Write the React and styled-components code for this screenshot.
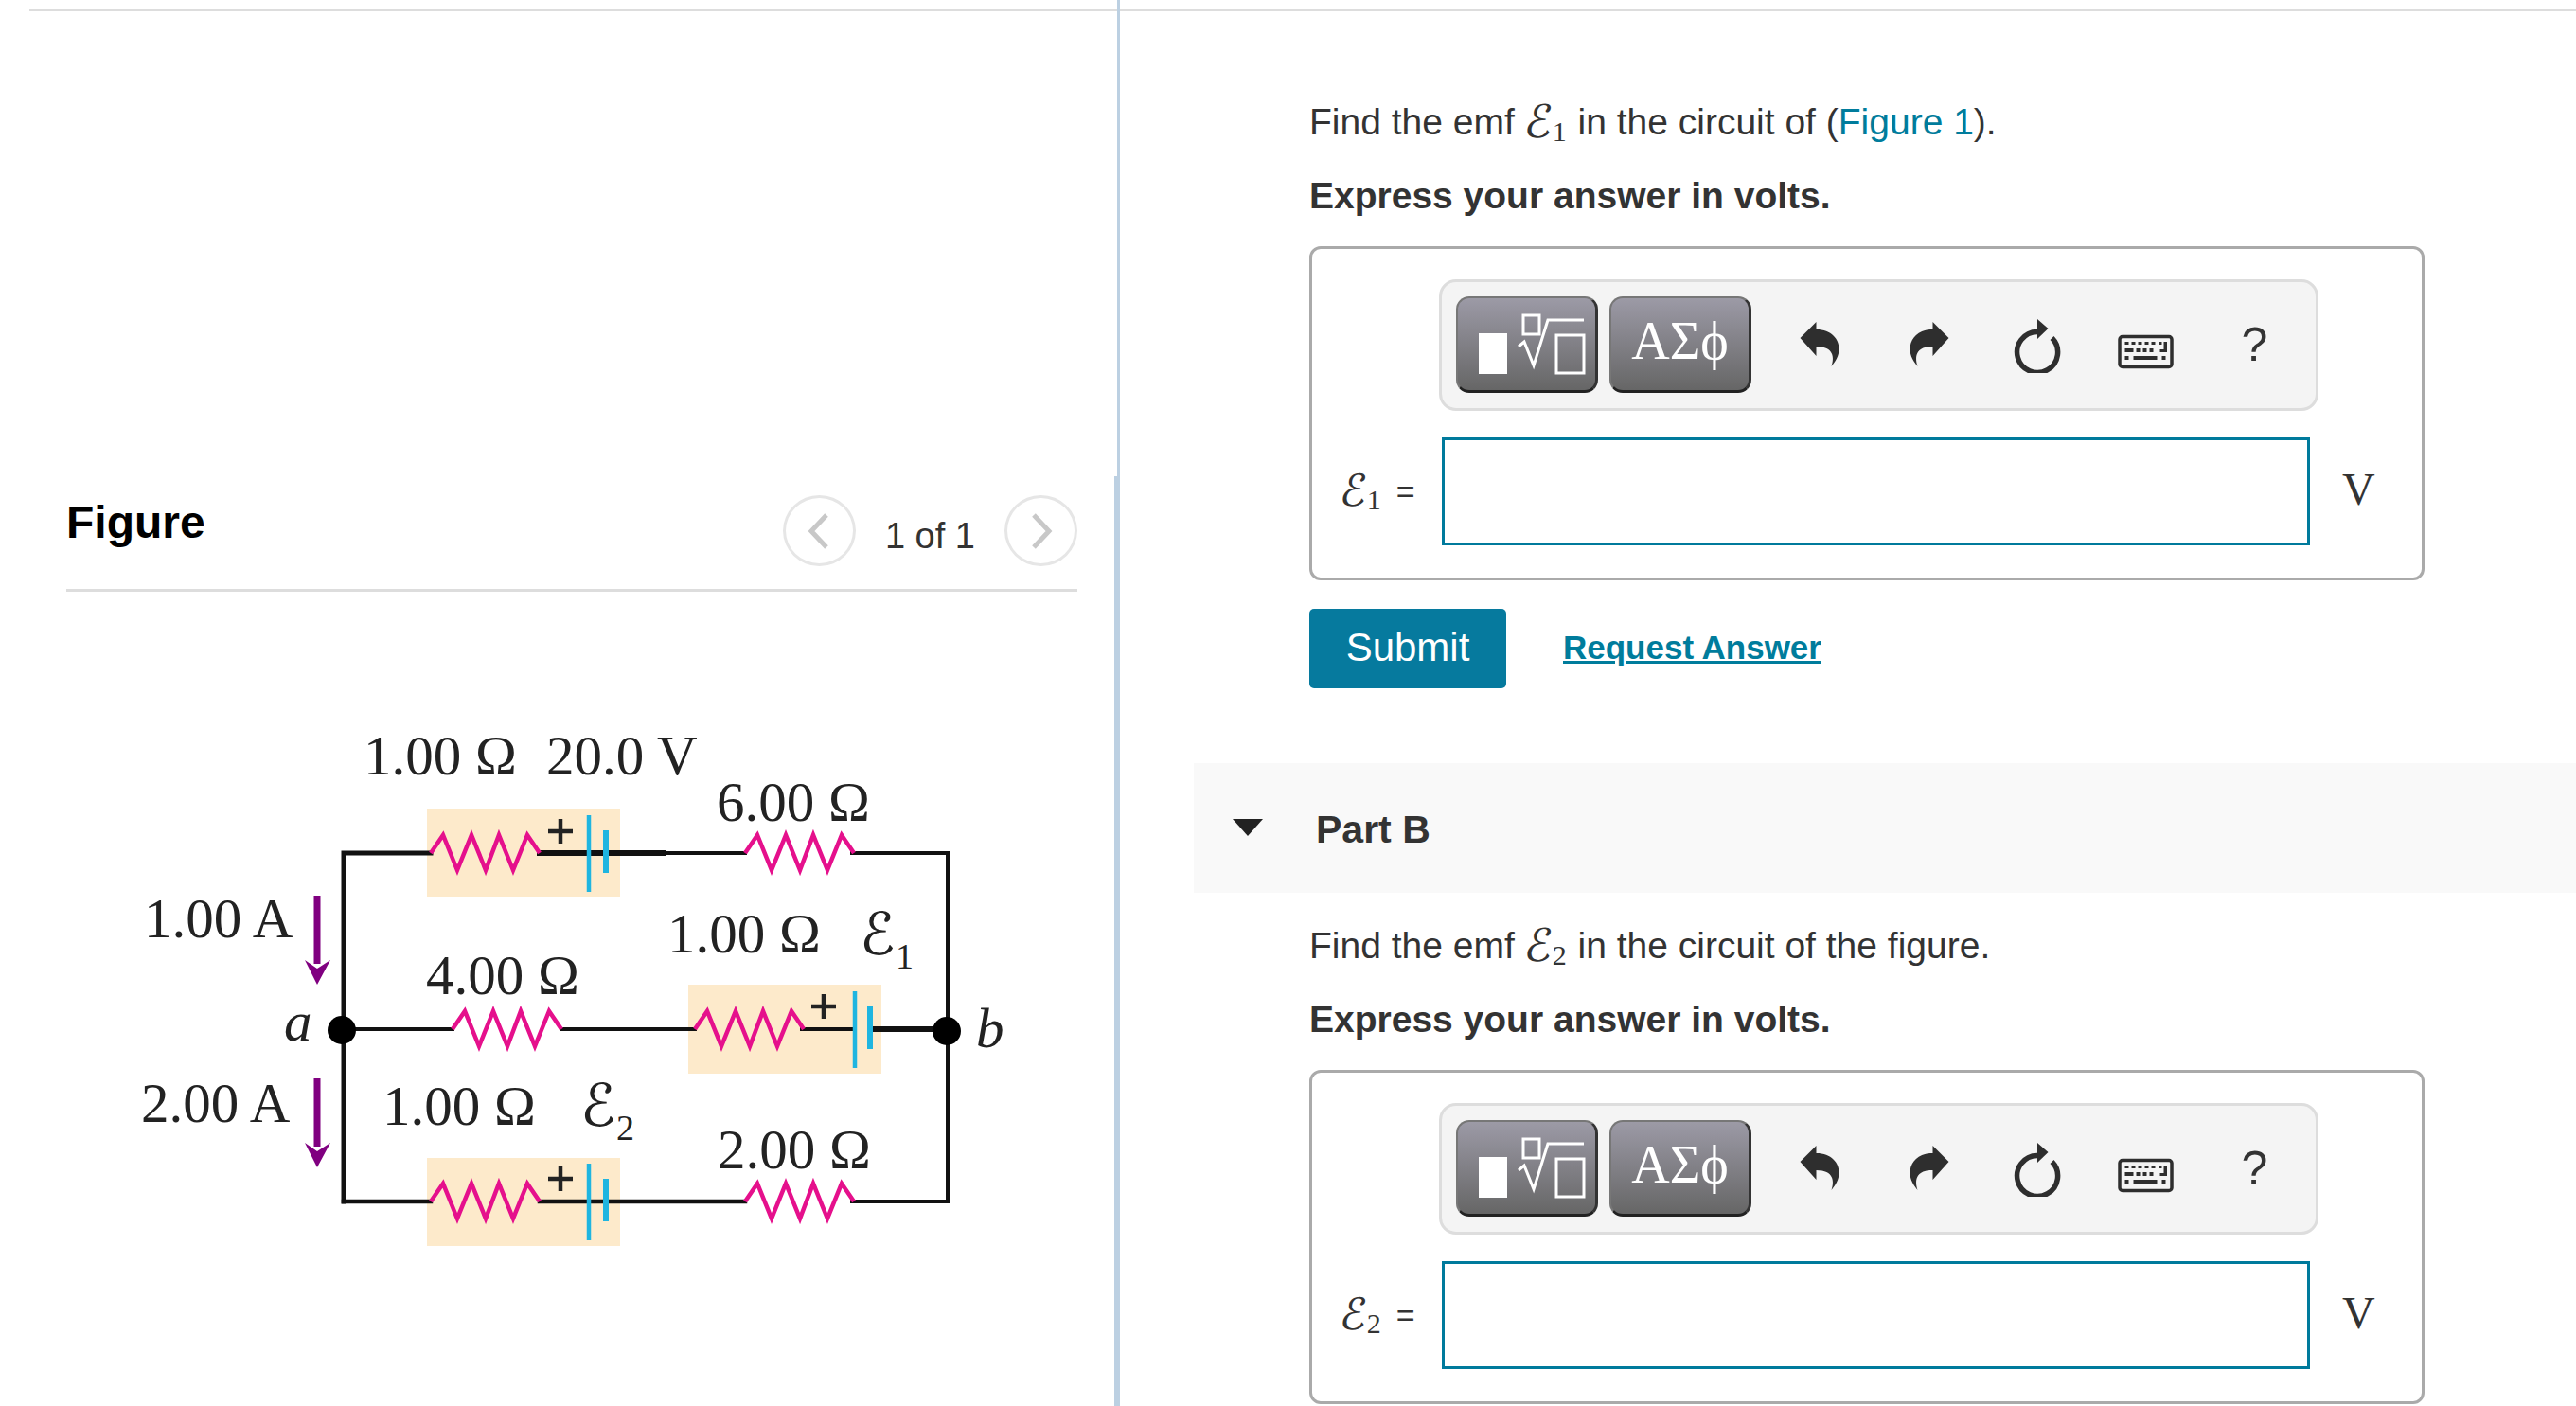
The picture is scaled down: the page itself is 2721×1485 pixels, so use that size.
import React from "react";
import styled, { createGlobalStyle } from "styled-components";

const Global = createGlobalStyle`
  html, body { margin: 0; padding: 0; background: #fff; overflow: hidden; }
  body { font-family: "Liberation Sans", Arial, sans-serif; color: #333; }
`;

const Page = styled.div`
  display: flex;
  width: 2721px;
  height: 1485px;
  overflow: hidden;
  background: #fff;
`;
const LeftPane = styled.div`
  flex: 0 0 1180px;
  display: flex;
  flex-direction: column;
`;
const RightPane = styled.div`
  flex: 1;
  min-width: 0;
  border-left: 3px solid #bcd0e2;
`;
const TopRule = styled.div`
  height: 3px;
  margin: 9px 0 0 ${(p) => p.$inset || 0}px;
  background: #ddd;
`;
const FigurePanel = styled.section`
  flex: 1;
  margin-top: 491px;
  padding-top: 20px;
  border-right: 3px solid #bcd0e2;
`;
const FigureHeader = styled.header`
  display: flex;
  align-items: flex-start;
  margin: 0 39px 0 70px;
  padding-bottom: 24px;
  border-bottom: 3px solid #ddd;
`;
const FigureTitle = styled.h2`
  margin: 2px 0 0;
  font-size: 48px;
  line-height: 54px;
  font-weight: 700;
  color: #000;
`;
const Pager = styled.div`
  margin-left: auto;
  display: flex;
  align-items: center;
  gap: 31px;
`;
const PagerButton = styled.div`
  box-sizing: border-box;
  width: 77px;
  height: 75px;
  border: 3px solid #e6e6e6;
  border-radius: 50%;
  display: flex;
  align-items: center;
  justify-content: center;
`;
const PagerText = styled.span`
  padding-top: 10px;
  font-size: 38px;
  line-height: 44px;
  color: #333;
`;
const Circuit = styled.svg`
  display: block;
  margin: 136px 0 0 140px;
  width: 960px;
  height: 570px;
`;
const CircuitLabel = styled.text`
  font-family: "Liberation Serif", "Times New Roman", serif;
  font-size: ${(p) => p.$size || 59}px;
  font-style: ${(p) => (p.$italic ? "italic" : "normal")};
  fill: #222;
`;
const CircuitEmf = styled.text`
  font-family: "DejaVu Serif", "DejaVu Sans", serif;
  font-size: 62px;
  font-style: italic;
  fill: #222;
`;
const Part = styled.div`
  padding-left: 200px;
`;
const Prompt = styled.p`
  margin: ${(p) => p.$top}px 0 0;
  font-size: 39px;
  line-height: 50px;
  color: #333;
`;
const Instruction = styled.p`
  margin: 28px 0 0;
  font-size: 39px;
  line-height: 49px;
  font-weight: 700;
  color: #333;
`;
const FigureLink = styled.a`
  color: #007c9c;
`;
const Emf = styled.span`
  display: inline-block;
  line-height: 0;
  font-family: "DejaVu Serif", "DejaVu Sans", serif;
  font-style: italic;
  font-size: ${(p) => p.$size || 48}px;
  transform: translateY(3px) skewX(-8deg);
`;
const EmfSub = styled.sub`
  font-family: "Liberation Serif", serif;
  font-size: ${(p) => p.$size || 30}px;
  line-height: 0;
  vertical-align: -7px;
  margin-right: ${(p) => p.$gap ?? 0}px;
`;
const AnswerBox = styled.div`
  box-sizing: border-box;
  width: 1178px;
  height: 353px;
  margin-top: 29px;
  padding: 32px 0 0 134px;
  border: 3px solid #aaa;
  border-radius: 12px;
`;
const Toolbar = styled.div`
  box-sizing: border-box;
  display: flex;
  align-items: center;
  width: 929px;
  height: 139px;
  padding-left: 15px;
  background: #f4f4f4;
  border: 3px solid #ddd;
  border-radius: 18px;
`;
const PaletteButton = styled.div`
  box-sizing: border-box;
  flex: 0 0 150px;
  height: 102px;
  margin-right: ${(p) => p.$gap || 0}px;
  margin-top: -2px;
  display: flex;
  align-items: center;
  justify-content: center;
  border-radius: 14px;
  background: linear-gradient(#9c9aa6, #666);
  border: 2px solid #777;
  border-bottom: 3px solid #222;
  border-right: 3px solid #333;
  color: #fff;
  font-family: "Liberation Serif", serif;
  font-size: 56px;
  line-height: 90px;
`;
const PaletteLetters = styled.span`
  margin-top: -6px;
`;
const ToolIcon = styled.div`
  flex: 0 0 115px;
  display: flex;
  justify-content: center;
  align-items: center;
  margin-top: -1px;
  color: #2e2e2e;
`;
const FirstTool = styled(ToolIcon)`
  margin-left: ${(p) => p.$gap}px;
`;
const Help = styled.span`
  font-size: 50px;
  line-height: 60px;
  color: #333;
`;
const AnswerRow = styled.div`
  display: flex;
  align-items: center;
  margin: 28px 0 0 -134px;
`;
const AnswerLabel = styled.div`
  flex: 0 0 137px;
  box-sizing: border-box;
  padding-left: 30px;
  font-size: 34px;
  line-height: 50px;
  color: #333;
  white-space: nowrap;
`;
const AnswerInput = styled.div`
  box-sizing: border-box;
  flex: 0 0 917px;
  height: 114px;
  border: 3px solid #007a9c;
  background: #fff;
`;
const Unit = styled.span`
  margin: -6px 0 0 34px;
  font-family: "Liberation Serif", serif;
  font-size: 48px;
  color: #333;
`;
const Actions = styled.div`
  display: flex;
  align-items: center;
  margin-top: 30px;
  gap: 60px;
`;
const Submit = styled.div`
  width: 208px;
  height: 84px;
  padding-bottom: 3px;
  box-sizing: border-box;
  display: flex;
  align-items: center;
  justify-content: center;
  background: #067a9e;
  color: #fff;
  border-radius: 5px;
  font-size: 42px;
`;
const RequestLink = styled.a`
  margin-top: -3px;
  color: #007c9c;
  font-size: 35px;
  font-weight: 700;
  text-decoration: underline;
`;
const PartBar = styled.div`
  display: flex;
  align-items: center;
  height: 137px;
  margin: 79px 0 0 78px;
  padding-left: 41px;
  background: #f9f9f9;
`;
const Caret = styled.div`
  width: 0;
  height: 0;
  border-left: 16px solid transparent;
  border-right: 16px solid transparent;
  border-top: 18px solid #222;
  margin: -2px 56px 0 0;
`;
const PartTitle = styled.h3`
  margin: 3px 0 0;
  font-size: 41px;
  font-weight: 700;
  color: #333;
`;

const ZIG = [13, 28, 43, 58, 72, 87, 102, 115];
const Resistor = ({ x, y }) => {
  const pts = [[x, y]];
  ZIG.forEach((d, i) => {
    const ny = i === ZIG.length - 1 ? y : i % 2 === 0 ? y - 19 : y + 18;
    pts.push([x + d, ny]);
  });
  return <polyline points={pts.map((p) => p.join(",")).join(" ")} fill="none" stroke="#e5108c" strokeWidth="4.5" />;
};
const Wire = ({ d, w = 4 }) => <path d={d} fill="none" stroke="#111" strokeWidth={w} strokeLinecap="square" />;
const Battery = ({ x, y, gap = 18 }) => (
  <g stroke="#1fb5e0">
    <line x1={x} x2={x} y1={y - 40} y2={y + 41} strokeWidth="4.5" />
    <line x1={x + gap} x2={x + gap} y1={y - 24} y2={y + 21} strokeWidth="6" />
  </g>
);
const Plus = ({ x, y }) => (
  <path d={`M${x - 13} ${y}H${x + 13}M${x} ${y - 13}V${y + 13}`} stroke="#222" strokeWidth="4.5" />
);
const CurrentArrow = ({ y }) => (
  <g fill="#800080">
    <rect x={331.5} y={y} width="7" height={72} />
    <path d={`M322 ${y + 68}L335 ${y + 77}L349 ${y + 68}L335 ${y + 94}Z`} />
  </g>
);

const CircuitFigure = () => (
  <Circuit viewBox="140 760 960 570">
    <rect x="451" y="853" width="204" height="93" fill="#fdeacb" />
    <rect x="727" y="1039" width="204" height="94" fill="#fdeacb" />
    <rect x="451" y="1222" width="204" height="93" fill="#fdeacb" />
    <Wire d="M363 1268V900H455" w={5} />
    <Wire d="M570 900H700" w={6} />
    <Wire d="M700 900H787M900 900H1001V1268H900" />
    <Wire d="M787 1268H570M455 1268H363" w={4.5} />
    <Wire d="M361 1086H478M593 1086H734M847 1086H903" />
    <Wire d="M919 1086H1000" w={6} />
    <Resistor x={455} y={900} />
    <Resistor x={787} y={900} />
    <Resistor x={478} y={1086} />
    <Resistor x={734} y={1086} />
    <Resistor x={455} y={1268} />
    <Resistor x={787} y={1268} />
    <Battery x={622} y={900} />
    <Battery x={903} y={1086} gap={16} />
    <Battery x={622} y={1268} />
    <Plus x={592} y={877} />
    <Plus x={870} y={1062} />
    <Plus x={592} y={1244} />
    <circle cx="361" cy="1087" r="15" fill="#000" />
    <circle cx="1000" cy="1088" r="15" fill="#000" />
    <CurrentArrow y={945} />
    <CurrentArrow y={1138} />
    <CircuitLabel x="384" y="817">1.00 Ω</CircuitLabel>
    <CircuitLabel x="577" y="817">20.0 V</CircuitLabel>
    <CircuitLabel x="757" y="866">6.00 Ω</CircuitLabel>
    <CircuitLabel x="152" y="989">1.00 A</CircuitLabel>
    <CircuitLabel x="705" y="1005">1.00 Ω</CircuitLabel>
    <CircuitLabel x="450" y="1049">4.00 Ω</CircuitLabel>
    <CircuitLabel x="149" y="1184">2.00 A</CircuitLabel>
    <CircuitLabel x="404" y="1187">1.00 Ω</CircuitLabel>
    <CircuitLabel x="758" y="1233">2.00 Ω</CircuitLabel>
    <CircuitLabel x="300" y="1098" $italic>a</CircuitLabel>
    <CircuitLabel x="1031" y="1105" $italic>b</CircuitLabel>
    <CircuitEmf x="908" y="1007">ℰ</CircuitEmf>
    <CircuitLabel x="946" y="1022" $size={38}>1</CircuitLabel>
    <CircuitEmf x="613" y="1188">ℰ</CircuitEmf>
    <CircuitLabel x="651" y="1203" $size={38}>2</CircuitLabel>
  </Circuit>
);

const Chevron = ({ dir }) => (
  <svg width="28" height="40" viewBox="0 0 28 40">
    <polyline
      points={dir === "left" ? "22,3 6,20 22,37" : "6,3 22,20 6,37"}
      fill="none"
      stroke="#c8c8c8"
      strokeWidth="5"
    />
  </svg>
);

const TemplateGlyph = () => (
  <svg width="145" height="97" viewBox="1540 315 145 97">
    <rect x="1562" y="352" width="30" height="43" fill="#fff" />
    <g fill="none" stroke="#fff" strokeWidth="3">
      <rect x="1609" y="333" width="17" height="20" />
      <path d="M1604 366L1610 361L1620 386L1635 338H1673" />
      <rect x="1644" y="354" width="29" height="40" />
    </g>
  </svg>
);
const ICON_BOX = (c) => `${c - 30} 334 60 60`;
const Undo = () => (
  <svg width="60" height="60" viewBox={ICON_BOX(1922.5)}>
    <path d="M1902 357L1919 340V348C1935 348 1943 358 1943 369C1943 376 1939 382 1935 387C1938 378 1938 366 1919 366V376Z" fill="currentColor" />
  </svg>
);
const Redo = () => (
  <svg width="60" height="60" viewBox={ICON_BOX(2037.5)}>
    <path d="M2059 357L2042 340V348C2026 348 2018 358 2018 369C2018 376 2022 382 2026 387C2023 378 2023 366 2042 366V376Z" fill="currentColor" />
  </svg>
);
const Reset = () => (
  <svg width="60" height="60" viewBox={ICON_BOX(2152.5)}>
    <path d="M2152.5 350.5A21.5 21.5 0 1 0 2168 357" fill="none" stroke="currentColor" strokeWidth="5.5" />
    <path d="M2152.5 337L2164 347L2152.5 358Z" fill="currentColor" />
  </svg>
);
const Keyboard = () => (
  <svg width="60" height="60" viewBox={ICON_BOX(2267.5)}>
    <rect x="2239.5" y="355.5" width="55" height="32" rx="3" fill="none" stroke="currentColor" strokeWidth="3.5" />
    <path
      fill="currentColor"
      d="M2245 361h4v3h-4zM2252 361h4v3h-4zM2259 361h4v3h-4zM2266 361h4v3h-4zM2273 361h4v3h-4zM2281 361h3v3h-3zM2286 361h3.5v11h-7.5v-3h4zM2245 368h9v4h-9zM2257 368h4v4h-4zM2264 368h4v4h-4zM2271 368h4v4h-4zM2245 376h4v4h-4zM2254 376h25v4h-25zM2284 376h4v4h-4z"
    />
  </svg>
);

const QuestionPart = ({ index, top, prompt }) => (
  <Part>
    {prompt(top)}
    <Instruction>Express your answer in volts.</Instruction>
    <AnswerBox>
      <Toolbar>
        <PaletteButton $gap={12}><TemplateGlyph /></PaletteButton>
        <PaletteButton><PaletteLetters>ΑΣϕ</PaletteLetters></PaletteButton>
        <FirstTool $gap={14}><Undo /></FirstTool>
        <ToolIcon><Redo /></ToolIcon>
        <ToolIcon><Reset /></ToolIcon>
        <ToolIcon><Keyboard /></ToolIcon>
        <ToolIcon><Help>?</Help></ToolIcon>
      </Toolbar>
      <AnswerRow>
        <AnswerLabel>
          <Emf $size={46}>ℰ</Emf><EmfSub $size={30} $gap={16}>{index}</EmfSub>=
        </AnswerLabel>
        <AnswerInput />
        <Unit>V</Unit>
      </AnswerRow>
    </AnswerBox>
  </Part>
);

export default function App() {
  return (
    <Page>
      <Global />
      <LeftPane>
        <TopRule $inset={31} />
        <FigurePanel>
          <FigureHeader>
            <FigureTitle>Figure</FigureTitle>
            <Pager>
              <PagerButton><Chevron dir="left" /></PagerButton>
              <PagerText>1 of 1</PagerText>
              <PagerButton><Chevron dir="right" /></PagerButton>
            </Pager>
          </FigureHeader>
          <CircuitFigure />
        </FigurePanel>
      </LeftPane>
      <RightPane>
        <TopRule />
        <QuestionPart
          index={1}
          top={92}
          prompt={(top) => (
            <Prompt $top={top}>
              Find the emf <Emf>ℰ</Emf><EmfSub $gap={1}>1</EmfSub> in the circuit of (<FigureLink>Figure 1</FigureLink>).
            </Prompt>
          )}
        />
        <Part>
          <Actions>
            <Submit>Submit</Submit>
            <RequestLink>Request Answer</RequestLink>
          </Actions>
        </Part>
        <PartBar>
          <Caret />
          <PartTitle>Part B</PartTitle>
        </PartBar>
        <QuestionPart
          index={2}
          top={31}
          prompt={(top) => (
            <Prompt $top={top}>
              Find the emf <Emf>ℰ</Emf><EmfSub $gap={1}>2</EmfSub> in the circuit of the figure.
            </Prompt>
          )}
        />
      </RightPane>
    </Page>
  );
}
